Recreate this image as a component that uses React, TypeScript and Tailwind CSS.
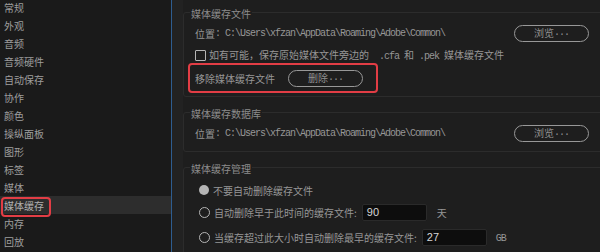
const cjk = { fontFamily: '"Noto Sans CJK SC", "Liberation Sans", sans-serif' };

const navItems = [
  '常规',
  '外观',
  '音频',
  '音频硬件',
  '自动保存',
  '协作',
  '颜色',
  '操纵面板',
  '图形',
  '标签',
  '媒体',
  '媒体缓存',
  '内存',
  '回放',
];

function Mono({ children }: { children: React.ReactNode }) {
  return (
    <span className="font-['Liberation_Mono',monospace] text-[10px] tracking-[-1px] whitespace-pre">{children}</span>
  );
}

function PillButton({ label, className = '' }: { label: string; className?: string }) {
  return (
    <button
      className={`flex h-[17px] w-[75px] items-center justify-center rounded-full border-[1.5px] border-[#989898] text-[10px] leading-none text-[#8f8f8f] ${className}`}
    >
      {label}
      <Mono>...</Mono>
    </button>
  );
}

function Group({ title, children, className = '' }: { title: string; children: React.ReactNode; className?: string }) {
  return (
    <fieldset className={`-mr-[8px] rounded-[3px] border border-[#2c2c2c] ${className}`}>
      <legend className="ml-[6px] px-[1px] pt-[4px] text-[10px] leading-[14px] text-[#8c8c8c]">{title}</legend>
      {children}
    </fieldset>
  );
}

function Radio({ checked }: { checked?: boolean }) {
  return checked ? (
    <span className="h-[10px] w-[10px] shrink-0 rounded-full bg-[#b5b5b5]" />
  ) : (
    <span className="h-[11px] w-[11px] shrink-0 rounded-full border-[1.5px] border-[#b5b5b5]" />
  );
}

function NumBox({ value }: { value: string }) {
  return (
    <div className="flex h-[17px] w-[65px] items-center rounded-[2px] border border-[#2a2a2a] bg-[#0d0d0d] pl-[4px] font-['Liberation_Sans',sans-serif] text-[11px] text-[#d6d6d6]">
      {value}
    </div>
  );
}

export default function App() {
  return (
    <div className="flex h-[252px] w-[600px] overflow-hidden bg-[#1e1e1e]" style={cjk}>
      <aside className="w-[171px] shrink-0 bg-[#1a1a1a]">
        <ul className="-mt-[2px]">
          {navItems.map((item) => {
            const active = item === '媒体缓存';
            return (
              <li
                key={item}
                className={`relative flex h-[18px] items-center pl-[4px] text-[10px] ${active ? 'bg-[#2d2d2d] text-[#b0b0b0]' : 'text-[#9e9e9e]'}`}
              >
                {item}
                {active && (
                  <span className="absolute top-[1px] left-[1px] h-[20px] w-[50px] rounded-[4px] border-2 border-[#e23d45]" />
                )}
              </li>
            );
          })}
        </ul>
      </aside>
      <div className="w-px shrink-0 bg-[#2e5d90]" />
      <div className="w-[11px] shrink-0 bg-[#222222]" />

      <main className="flex min-w-0 flex-1 flex-col overflow-hidden pt-[3px] text-[10px] text-[#969696]">
        <Group title="媒体缓存文件" className="pb-[3px]">
          <div className="mt-[3px] flex h-[18px] items-center pr-[18px] pl-[11px]">
            <span>位置</span>
            <Mono>: C:\Users\xfzan\AppData\Roaming\Adobe\Common\</Mono>
            <PillButton label="浏览" className="ml-auto h-[16px]" />
          </div>
          <div className="mt-[6px] flex h-[14px] items-center pl-[11px]">
            <span className="h-[11px] w-[11px] shrink-0 rounded-[1px] border-[1.5px] border-[#b5b5b5]" />
            <span className="ml-[3px] whitespace-pre">
              如有可能，保存原始媒体文件旁边的
              <Mono>  .cfa </Mono>和<Mono> .pek </Mono>媒体缓存文件
            </span>
          </div>
          <div className="mt-[1px] ml-[4px] flex h-[30px] w-[190px] items-center rounded-[4px] border-2 border-[#e23d45] pl-[5px]">
            <span className="w-[93px]">移除媒体缓存文件</span>
            <PillButton label="删除" />
          </div>
        </Group>

        <Group title="媒体缓存数据库" className="mt-[6px] pb-[9px]">
          <div className="mt-[3px] flex h-[18px] items-center pr-[18px] pl-[11px]">
            <span>位置</span>
            <Mono>: C:\Users\xfzan\AppData\Roaming\Adobe\Common\</Mono>
            <PillButton label="浏览" className="ml-auto h-[16px]" />
          </div>
        </Group>

        <Group title="媒体缓存管理" className="mt-[6px] pb-[10px]">
          <div className="mt-[6px] flex h-[16px] items-center gap-[4px] pl-[15px]">
            <Radio checked />
            <span>不要自动删除缓存文件</span>
          </div>
          <div className="mt-[4px] flex h-[20px] items-center pl-[15px]">
            <Radio />
            <span className="ml-[4px]">自动删除早于此时间的缓存文件:</span>
            <div className="ml-[5px]">
              <NumBox value="90" />
            </div>
            <span className="ml-[10px]">天</span>
          </div>
          <div className="mt-[5px] flex h-[20px] items-center pl-[15px]">
            <Radio />
            <span className="ml-[4px]">当缓存超过此大小时自动删除最早的缓存文件:</span>
            <div className="ml-[5px]">
              <NumBox value="27" />
            </div>
            <span className="ml-[9px]">
              <Mono>GB</Mono>
            </span>
          </div>
        </Group>
      </main>
    </div>
  );
}
